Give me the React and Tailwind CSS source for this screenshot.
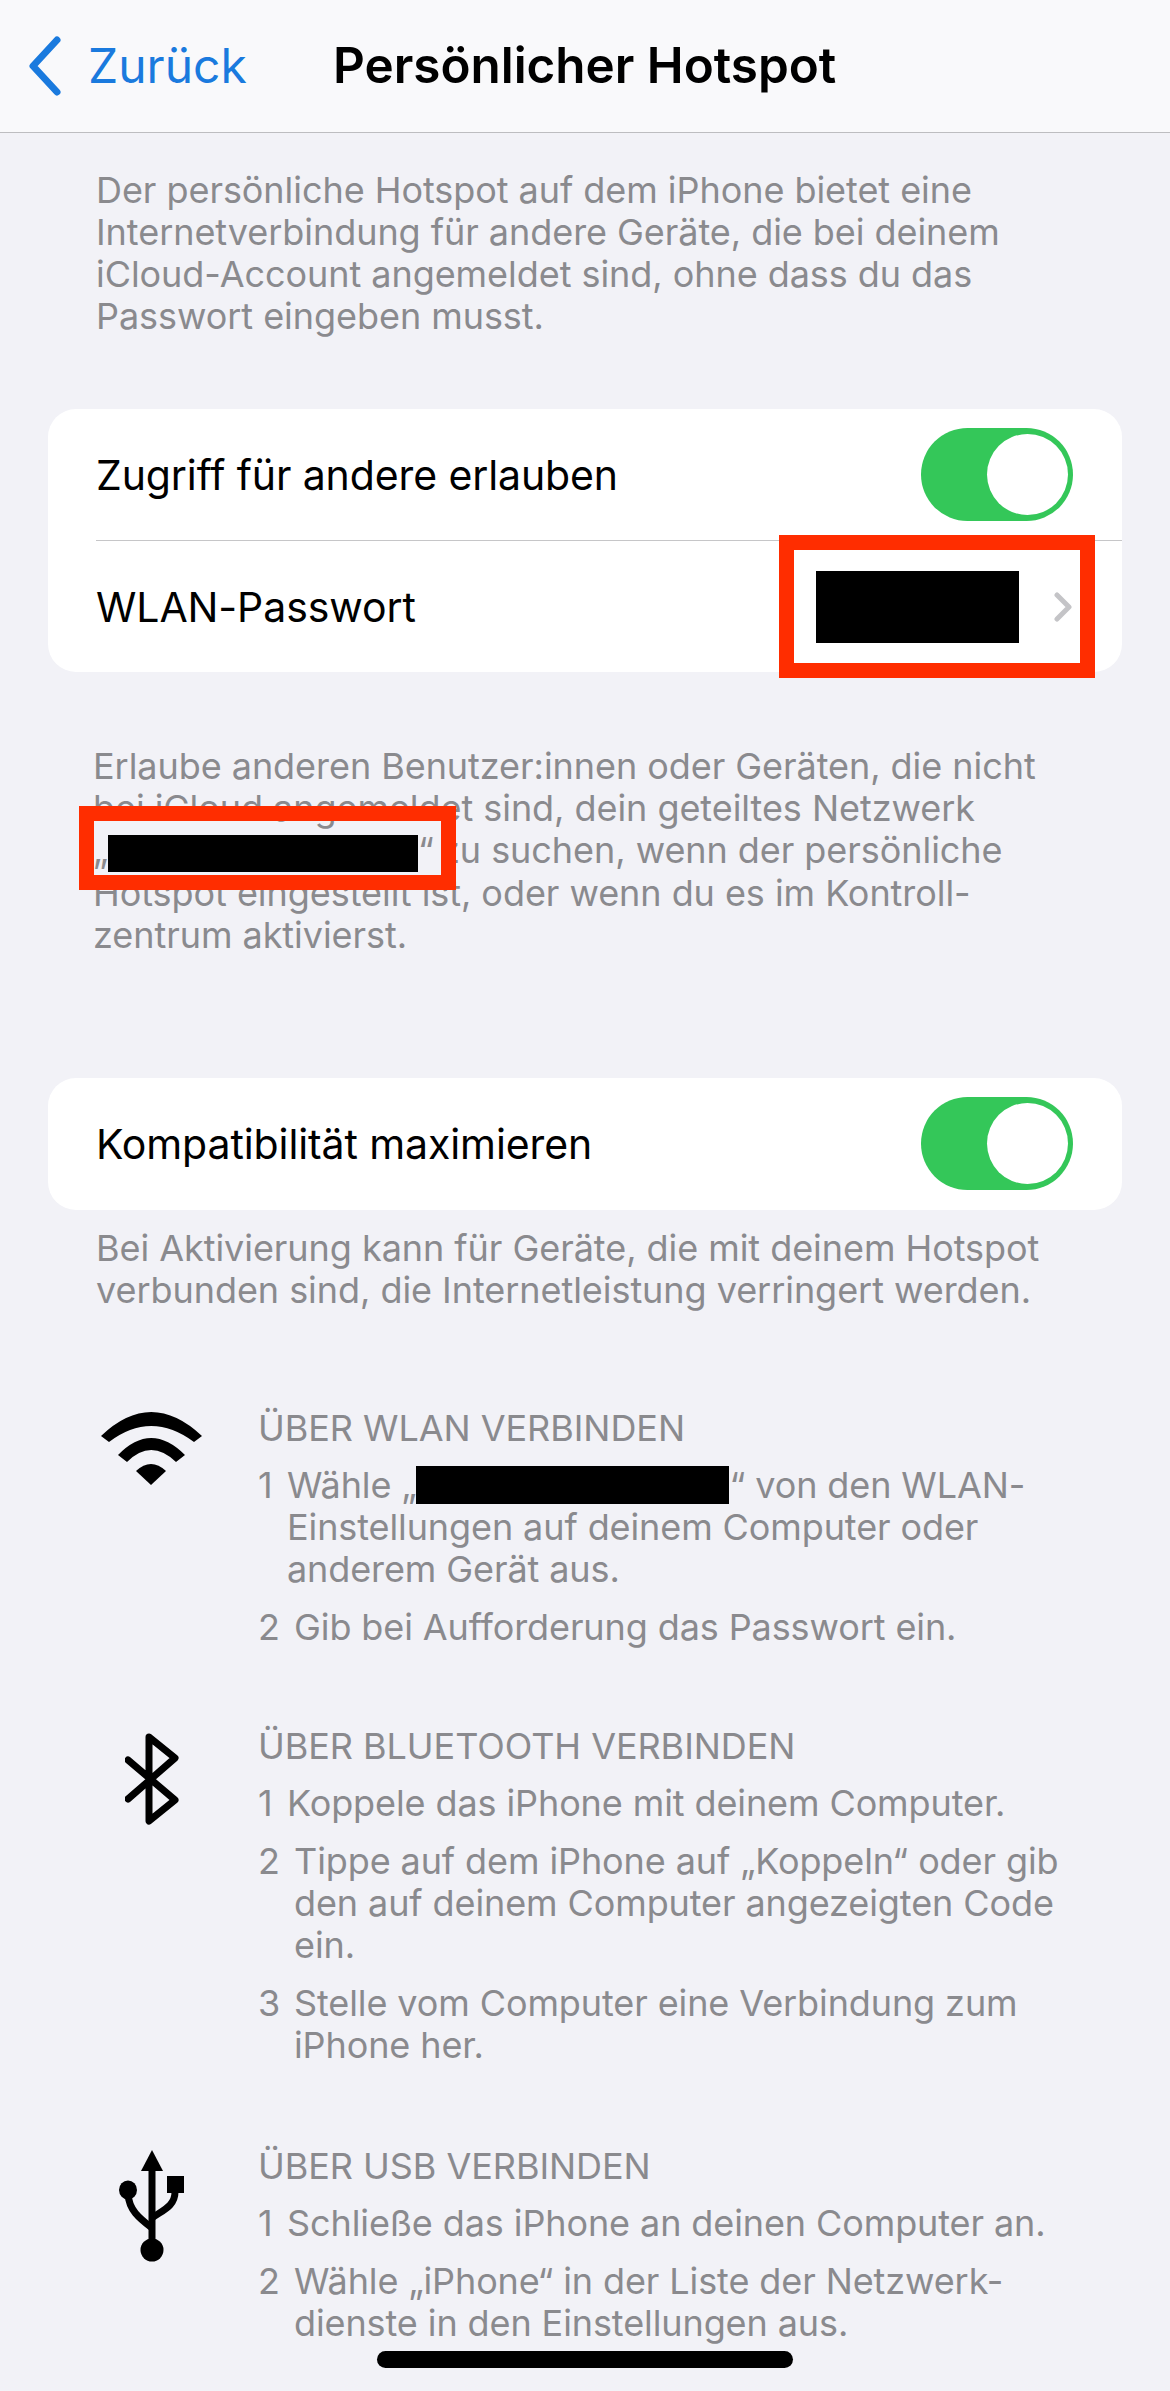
import React from 'react'

function Toggle() {
  return (
    <div className="w-[152px] h-[93px] rounded-full bg-[#34c759] flex items-center justify-end pr-[5px] shrink-0">
      <div className="w-[81px] h-[81px] rounded-full bg-white" />
    </div>
  )
}

function Note({ lines, className }) {
  return (
    <div className={`text-[36px] leading-[42px] tracking-[-0.05px] text-[#8a8a8e] whitespace-nowrap ${className}`}>
      {lines.map((l, i) => (
        <div key={i}>{l}</div>
      ))}
    </div>
  )
}

function Step({ num, gap, lines }) {
  return (
    <div className="flex text-[36px] leading-[42px] tracking-[-0.1px] text-[#8a8a8e] whitespace-nowrap">
      <div className={gap}>{num}</div>
      <div>
        {lines.map((l, i) => (
          <div key={i}>{l}</div>
        ))}
      </div>
    </div>
  )
}

function Section({ icon, iconTop, title, className, children }) {
  return (
    <section className={`flex pl-[68px] ${className}`}>
      <div className={`w-[167px] mr-[23px] flex justify-center items-start shrink-0 ${iconTop}`}>{icon}</div>
      <div>
        <div className="text-[36px] leading-[42px] tracking-[-0.05px] text-[#8a8a8e] mb-[15px] whitespace-nowrap">{title}</div>
        <div className="flex flex-col gap-4">{children}</div>
      </div>
    </section>
  )
}

function WifiIcon() {
  return (
    <svg width="101" height="73" viewBox="0 0 101 73" fill="#000">
      <path d="M0 24Q50 -24 101 24L93 30Q50 -2 8 30Z" />
      <path d="M17 43Q50 9 84 43L75 50Q50 26 26 50Z" />
      <path d="M35 59Q50 45 65 59L50 73Z" />
    </svg>
  )
}

function BluetoothIcon() {
  return (
    <svg width="54" height="92" viewBox="0 0 54 92" fill="none" stroke="#000" strokeWidth="7" strokeLinejoin="round" strokeLinecap="round">
      <path d="M3 27L50 67L24 88V4L50 25L3 66" />
    </svg>
  )
}

function UsbIcon() {
  return (
    <svg width="65" height="112" viewBox="0 0 65 112" fill="#000">
      <path d="M33 0L44 21H22Z" />
      <rect x="29.5" y="16" width="7" height="84" />
      <circle cx="33" cy="100" r="11.5" />
      <ellipse cx="9" cy="40" rx="9" ry="9.5" />
      <rect x="48" y="26" width="17" height="17" />
      <path d="M9 44C10 60 20 68 33 78" fill="none" stroke="#000" strokeWidth="7" />
      <path d="M56 42C56 56 44 60 33 68" fill="none" stroke="#000" strokeWidth="7" />
    </svg>
  )
}

export default function App() {
  return (
    <div className="relative w-[1170px] h-[2391px] overflow-hidden bg-[#f2f2f7] font-['Inter',sans-serif]">
      {/* Nav bar */}
      <header className="h-[133px] bg-[#f9f9fb] border-b border-[#bdbdc0] flex items-center">
        <svg width="40" height="62" viewBox="0 0 40 62" fill="none" className="ml-[25px] shrink-0" stroke="#1a7ade" strokeWidth="7" strokeLinecap="round" strokeLinejoin="round">
          <path d="M32 5L8 31L32 57" />
        </svg>
        <span className="ml-[23px] w-[245px] text-[48px] text-[#1a7ade] leading-none">Zurück</span>
        <span className="text-[49.4px] font-semibold text-black leading-none whitespace-nowrap">Persönlicher Hotspot</span>
      </header>

      <Note
        className="pl-[96px] pt-[36px]"
        lines={[
          'Der persönliche Hotspot auf dem iPhone bietet eine',
          'Internetverbindung für andere Geräte, die bei deinem',
          'iCloud-Account angemeldet sind, ohne dass du das',
          'Passwort eingeben musst.',
        ]}
      />

      {/* Hotspot settings */}
      <div className="relative mx-[48px] mt-[72px] bg-white rounded-[28px] text-[41px] tracking-[-0.1px] text-black">
        <div className="h-[131px] flex items-center justify-between pl-[48px] pr-[49px]">
          <span className="pt-[2px]">Zugriff für andere erlauben</span>
          <Toggle />
        </div>
        <div className="ml-[48px] h-px bg-[#c6c6c8]" />
        <div className="h-[131px] flex items-center pl-[48px] pr-[50px]">
          <span className="pt-[2px]">WLAN-Passwort</span>
          <div className="ml-auto w-[203px] h-[72px] bg-black" />
          <svg width="18" height="30" viewBox="0 0 18 30" fill="none" className="ml-[35px]" stroke="#c4c4c7" strokeWidth="5" strokeLinecap="round" strokeLinejoin="round">
            <path d="M3 3L15 15L3 27" />
          </svg>
        </div>
        <div className="absolute left-[731px] top-[126px] w-[316px] h-[143px] border-[15px] border-[#ff2d00]" />
      </div>

      <div className="relative ml-[93px] mt-[73px] text-[36px] leading-[42px] tracking-[-0.05px] text-[#8a8a8e] whitespace-nowrap">
        <div>Erlaube anderen Benutzer:innen oder Geräten, die nicht</div>
        <div>bei iCloud angemeldet sind, dein geteiltes Netzwerk</div>
        <div>
          „<span className="inline-block w-[310px] h-[37px] bg-black align-middle" />“<span className="-ml-[4px]"> zu suchen, wenn der persönliche</span>
        </div>
        <div>Hotspot eingestellt ist, oder wenn du es im Kontroll-</div>
        <div>zentrum aktivierst.</div>
        <div className="absolute left-[-14px] top-[61px] w-[377px] h-[84px] border-[15px] border-[#ff2d00]" />
      </div>

      {/* Compatibility */}
      <div className="mx-[48px] mt-[122px] h-[132px] bg-white rounded-[28px] flex items-center justify-between pl-[48px] pr-[49px] text-[41px] tracking-[-0.1px] text-black">
        <span className="pt-[2px]">Kompatibilität maximieren</span>
        <Toggle />
      </div>

      <Note
        className="pl-[96px] mt-[17px]"
        lines={[
          'Bei Aktivierung kann für Geräte, die mit deinem Hotspot',
          'verbunden sind, die Internetleistung verringert werden.',
        ]}
      />

      {/* Connection instructions */}
      <Section className="mt-[96px]" iconTop="pt-[5px]" icon={<WifiIcon />} title="ÜBER WLAN VERBINDEN">
        <Step
          num="1"
          gap="w-[29px]"
          lines={[
            <span key="a">
              Wähle „<span className="inline-block w-[313px] h-[38px] -my-[10px] -translate-y-[3px] bg-black align-middle" />“ von den WLAN-
            </span>,
            'Einstellungen auf deinem Computer oder',
            'anderem Gerät aus.',
          ]}
        />
        <Step num="2" gap="w-[36px]" lines={['Gib bei Aufforderung das Passwort ein.']} />
      </Section>

      <Section className="mt-[77px]" iconTop="pt-[8px]" icon={<BluetoothIcon />} title="ÜBER BLUETOOTH VERBINDEN">
        <Step num="1" gap="w-[29px]" lines={['Koppele das iPhone mit deinem Computer.']} />
        <Step
          num="2"
          gap="w-[36px]"
          lines={['Tippe auf dem iPhone auf „Koppeln“ oder gib', 'den auf deinem Computer angezeigten Code', 'ein.']}
        />
        <Step num="3" gap="w-[36px]" lines={['Stelle vom Computer eine Verbindung zum', 'iPhone her.']} />
      </Section>

      <Section className="mt-[79px]" iconTop="pt-[5px]" icon={<UsbIcon />} title="ÜBER USB VERBINDEN">
        <Step num="1" gap="w-[29px]" lines={['Schließe das iPhone an deinen Computer an.']} />
        <Step num="2" gap="w-[36px]" lines={['Wähle „iPhone“ in der Liste der Netzwerk-', 'dienste in den Einstellungen aus.']} />
      </Section>

      {/* Home indicator */}
      <div className="absolute left-[377px] top-[2351px] w-[416px] h-[17px] rounded-full bg-black" />
    </div>
  )
}
